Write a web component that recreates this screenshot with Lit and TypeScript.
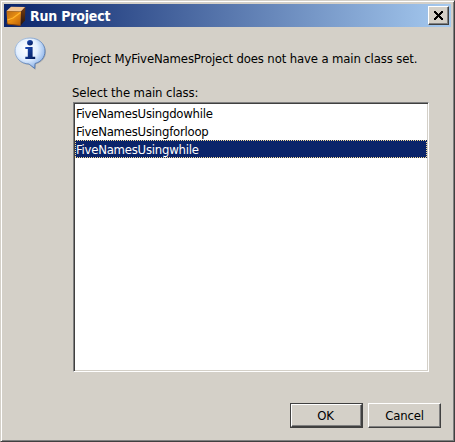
import { LitElement, html, css } from "lit";
import { customElement, property, state } from "lit/decorators.js";
import { classMap } from "lit/directives/class-map.js";

@customElement("app-icon")
class AppIcon extends LitElement {
  static styles = css`
    :host { display: block; width: 20px; height: 20px; }
    svg { display: block; }
  `;
  render() {
    return html`<svg width="20" height="20" viewBox="0 0 20 20">
      <defs>
        <linearGradient id="front" x1="0" y1="0" x2="1" y2="1">
          <stop offset="0" stop-color="#b96a12" /><stop offset=".5" stop-color="#e98d12" /><stop offset="1" stop-color="#b85f08" />
        </linearGradient>
        <linearGradient id="side" x1="0" y1="0" x2="0" y2="1">
          <stop offset="0" stop-color="#7a3d0c" /><stop offset="1" stop-color="#241410" />
        </linearGradient>
      </defs>
      <path d="M0.5 5L5 0.8L19.3 1L15 5.5Z" fill="#f3c490" />
      <path d="M15 5.5L19.3 1L19 14.5L14.5 19.5Z" fill="url(#side)" />
      <path d="M0.5 5L15 5.5L14.5 19.5L1.3 18Z" fill="url(#front)" />
      <path d="M1.5 14L7 12L14.5 6.5" fill="none" stroke="#ffb62c" stroke-width="1.2" />
      <path d="M1 16.5L1.3 18L14.5 19.5" fill="none" stroke="#8b4509" />
    </svg>`;
  }
}

@customElement("info-icon")
class InfoIcon extends LitElement {
  static styles = css`
    :host { display: block; width: 34px; height: 34px; }
    svg { display: block; }
  `;
  render() {
    return html`<svg width="34" height="34" viewBox="0 0 34 34">
      <defs>
        <radialGradient id="bubble" cx=".4" cy=".35" r=".7">
          <stop offset="0" stop-color="#fff" /><stop offset=".5" stop-color="#e4f0ff" /><stop offset="1" stop-color="#7faae6" />
        </radialGradient>
        <linearGradient id="rim" x1="0" y1="0" x2="1" y2="1">
          <stop offset="0" stop-color="#b4cbe6" /><stop offset="1" stop-color="#3f67a6" />
        </linearGradient>
        <linearGradient id="letter" x1="0" y1="0" x2="1" y2="1">
          <stop offset="0" stop-color="#1c4cb8" /><stop offset="1" stop-color="#041a55" />
        </linearGradient>
      </defs>
      <path d="M17 2C26 2 32 8 32 15C32 21 28 25.500 22 27.300L21.700 33L15.500 28C7 27.500 2 22 2 15C2 8 8 2 17 2Z" fill="#777" opacity=".35" />
      <path d="M16 1C25 1 31 7 31 14C31 20.500 27 25 21 26.500L20.700 31.500L15 27C7 26.800 1 21 1 14C1 7 7 1 16 1Z" fill="url(#bubble)" stroke="url(#rim)" />
      <ellipse cx="16" cy="5.800" rx="2.900" ry="2.700" fill="url(#letter)" />
      <path d="M11.300 10H18.600V19.800H21.200V22H11.300V19.800H13.800V12.100H11.300Z" fill="url(#letter)" />
    </svg>`;
  }
}

@customElement("dialog-button")
class DialogButton extends LitElement {
  @property() label = "";
  @property({ type: Boolean, reflect: true }) primary = false;
  static styles = css`
    :host { display: block; width: 73px; height: 25px; box-sizing: border-box; }
    :host([primary]) { border: 1px solid #404040; }
    button {
      display: block; width: 100%; height: 100%; box-sizing: border-box; margin: 0; padding: 0;
      font: inherit; letter-spacing: -0.15px; color: #000; background: #d4d0c8;
      border: 1px solid; border-color: #fff #404040 #404040 #fff;
      box-shadow: inset -1px -1px #808080; line-height: 22px; outline: none;
    }
    :host([primary]) button { line-height: 20px; padding-right: 2px; }
  `;
  render() {
    return html`<button>${this.label}</button>`;
  }
}

@customElement("app-root")
class AppRoot extends LitElement {
  @state() private selected = 2;
  private classes = ["FiveNamesUsingdowhile", "FiveNamesUsingforloop", "FiveNamesUsingwhile"];

  static styles = css`
    :host { display: block; width: 455px; height: 442px; }
    .window {
      box-sizing: border-box; width: 455px; height: 442px; background: #d4d0c8;
      border: 1px solid; border-color: #d4d0c8 #404040 #404040 #d4d0c8;
      box-shadow: inset 1px 1px #fff, inset -1px -1px #808080;
      padding: 3px; display: flex; flex-direction: column;
      font: 13px "DejaVu Sans Condensed", "DejaVu Sans", sans-serif;
      font-stretch: condensed; color: #000;
    }
    .title {
      height: 23px; display: flex; align-items: center; padding: 0 2px; gap: 4px;
      background: linear-gradient(90deg, #0a246a, #a6caf0); color: #fff;
    }
    .title h1 {
      flex: 1; margin: 0; font: bold 14px/22px "DejaVu Sans Condensed", "DejaVu Sans", sans-serif;
      font-stretch: condensed; letter-spacing: -0.2px;
    }
    .close {
      width: 21px; height: 19px; padding: 0; border: 1px solid; border-color: #fff #404040 #404040 #fff;
      box-shadow: inset -1px -1px #808080; background: #d4d0c8; box-sizing: border-box;
    }
    .close svg { display: block; margin: 0 0 0 5px; }
    .body { flex: 1; display: grid; grid-template-columns: 60px 356px; column-gap: 9px; align-content: start; }
    info-icon { margin: 10px 0 0 10px; }
    .content { display: flex; flex-direction: column; }
    .line { white-space: nowrap; line-height: 18px; margin-left: -1px; }
    .message { margin-top: 23px; letter-spacing: -0.135px; }
    .prompt { margin-top: 16px; letter-spacing: -0.1px; }
    .list {
      list-style: none; width: 356px; height: 270px; box-sizing: border-box;
      margin: 0; padding: 1px;
      background: #fff; border: 1px solid; border-color: #808080 #fff #fff #808080;
      box-shadow: inset 1px 1px #404040, inset -1px -1px #d4d0c8;
    }
    .list li { height: 18px; line-height: 19px; white-space: nowrap; box-sizing: border-box; padding-left: 1px; letter-spacing: -0.24px; }
    .list li.selected {
      color: #fff; background:
        repeating-linear-gradient(90deg, #f5db95 0 1px, #0a246a 1px 2px) 0 0 / 100% 1px no-repeat,
        repeating-linear-gradient(90deg, #f5db95 0 1px, #0a246a 1px 2px) 0 100% / 100% 1px no-repeat,
        repeating-linear-gradient(#f5db95 0 1px, #0a246a 1px 2px) 0 0 / 1px 100% no-repeat,
        repeating-linear-gradient(#f5db95 0 1px, #0a246a 1px 2px) 100% 0 / 1px 100% no-repeat,
        #0a246a;
    }
    .actions { display: flex; justify-content: flex-end; gap: 5px; padding: 0 10px 10px 0; }
  `;

  render() {
    return html`<div class="window">
      <header class="title">
        <app-icon></app-icon>
        <h1>Run Project</h1>
        <button class="close" aria-label="Close">
          <svg width="9" height="9" viewBox="0 0 9 9" shape-rendering="crispEdges">
            <path d="M0 0H2V1H3V2H4V3H5V2H6V1H7V0H9V2H8V3H7V4H6V5H7V6H8V7H9V9H7V8H6V7H5V6H4V7H3V8H2V9H0V7H1V6H2V5H3V4H2V3H1V2H0Z" />
          </svg>
        </button>
      </header>
      <main class="body">
        <info-icon></info-icon>
        <div class="content">
          <div class="line message">Project MyFiveNamesProject does not have a main class set.</div>
          <div class="line prompt">Select the main class:</div>
          <ul class="list">
            ${this.classes.map(
              (name, i) => html`<li class=${classMap({ selected: i === this.selected })} @click=${() => (this.selected = i)}>${name}</li>`
            )}
          </ul>
        </div>
      </main>
      <footer class="actions">
        <dialog-button primary label="OK"></dialog-button>
        <dialog-button label="Cancel"></dialog-button>
      </footer>
    </div>`;
  }
}
